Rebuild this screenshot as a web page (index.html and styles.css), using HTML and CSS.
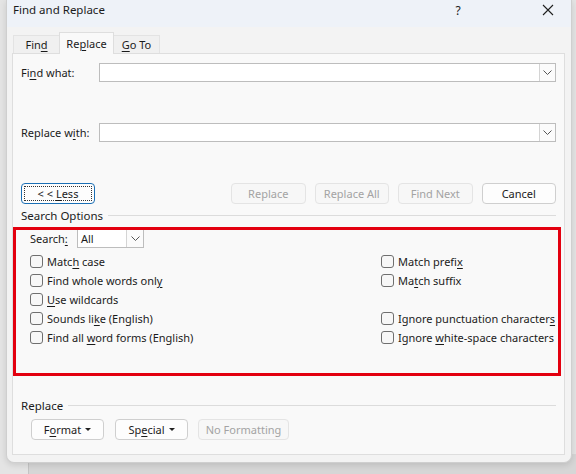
FILE: index.html
```html
<!DOCTYPE html>
<html>
<head>
<meta charset="utf-8">
<link rel="stylesheet" href="styles.css">
</head>
<body>
<div class="dialog">
  <div class="titlebar">
    <span class="title">Find and Replace</span>
    <span class="help">?</span>
    <span class="close"><svg width="12" height="12" viewBox="0 0 12 12"><path d="M1 1L11 11M11 1L1 11" stroke="#1f1f1f" stroke-width="1.1" fill="none"/></svg></span>
  </div>
  <div class="tabstrip">
    <div class="tab t-find"><span>Fin<u>d</u></span></div>
    <div class="tab active t-rep"><span>Re<u>p</u>lace</span></div>
    <div class="tab t-go"><span><u>G</u>o To</span></div>
  </div>
  <div class="panel">
    <div class="field first">
      <span class="flabel">Fi<u>n</u>d what:</span>
      <div class="combo"><div class="cbtn"><svg width="9" height="5" viewBox="0 0 9 5"><path d="M0.5 0.5L4.5 4.5L8.5 0.5" stroke="#555" fill="none"/></svg></div></div>
    </div>
    <div class="field second">
      <span class="flabel">Replace w<u>i</u>th:</span>
      <div class="combo"><div class="cbtn"><svg width="9" height="5" viewBox="0 0 9 5"><path d="M0.5 0.5L4.5 4.5L8.5 0.5" stroke="#555" fill="none"/></svg></div></div>
    </div>
    <div class="btnrow">
      <div class="btn less"><span class="focus"><span>&lt; &lt; <u>L</u>ess</span></span></div>
      <div class="spacer"></div>
      <div class="btn act dis">Replace</div>
      <div class="btn act dis">Replace All</div>
      <div class="btn act dis">Find Next</div>
      <div class="btn act">Cancel</div>
    </div>
    <div class="group g1"><span>Search Options</span><div class="rule"></div></div>
    <div class="options">
      <div class="searchrow">
        <span class="slabel">Search<u>:</u></span>
        <div class="sel"><span class="selv">All</span><div class="sbtn"><svg width="9" height="5" viewBox="0 0 9 5"><path d="M0.5 0.5L4.5 4.5L8.5 0.5" stroke="#555" fill="none"/></svg></div></div>
      </div>
      <div class="cols">
        <div class="col left">
          <div class="chk"><span class="box"></span><span>Matc<u>h</u> case</span></div>
          <div class="chk"><span class="box"></span><span>Find whole words onl<u>y</u></span></div>
          <div class="chk"><span class="box"></span><span><u>U</u>se wildcards</span></div>
          <div class="chk"><span class="box"></span><span>Sounds li<u>k</u>e (English)</span></div>
          <div class="chk"><span class="box"></span><span>Find all <u>w</u>ord forms (English)</span></div>
        </div>
        <div class="col right">
          <div class="chk"><span class="box"></span><span>Match prefi<u>x</u></span></div>
          <div class="chk"><span class="box"></span><span>Ma<u>t</u>ch suffix</span></div>
          <div class="chk blank"></div>
          <div class="chk"><span class="box"></span><span>Ignore punctuation character<u>s</u></span></div>
          <div class="chk"><span class="box"></span><span>Ignore <u>w</u>hite-space characters</span></div>
        </div>
      </div>
      <div class="highlight"></div>
    </div>
    <div class="group g2"><span>Replace</span><div class="rule"></div></div>
    <div class="btnrow2">
      <div class="btn drop"><span>F<u>o</u>rmat</span><span class="caret"></span></div>
      <div class="btn drop"><span>Sp<u>e</u>cial</span><span class="caret"></span></div>
      <div class="btn dis nf">No Formatting</div>
    </div>
  </div>
</div>
<div class="behind"></div>
</body>
</html>
```
FILE: styles.css
```css
html, body { margin: 0; padding: 0; }
body {
  width: 576px; height: 474px; overflow: hidden;
  background: #e4e4e4;
  font-family: "Noto Sans", "Open Sans", sans-serif;
  font-size: 11px;
  color: #1b1b1b;
}
u { text-decoration: underline; text-underline-offset: 2px; }
.dialog {
  position: relative; z-index: 1;
  margin-left: 6px;
  width: 566px; height: 463px;
  box-sizing: border-box;
  background: #f3f3f3;
  border: 1px solid #cfcfcf; border-top: none;
  border-radius: 0 0 8px 8px;
  display: flex; flex-direction: column;
  box-shadow: 0 2px 6px rgba(0,0,0,0.12);
}
.titlebar {
  height: 27px; flex: none; box-sizing: border-box;
  background: #eef2f8;
  display: flex; align-items: flex-start;
  padding-left: 6px; padding-top: 2px;
  font-size: 11.5px;
}
.title { flex: 1; }
.help { width: 20px; text-align: center; margin-right: 70px; font-size: 12px; }
.close { width: 20px; height: 16px; display: flex; align-items: center; justify-content: center; margin-right: 13px; }
.tabstrip {
  height: 26px; flex: none;
  display: flex; align-items: flex-end;
  padding-left: 6px;
}
.tab {
  height: 18px; box-sizing: border-box;
  display: flex; align-items: center; justify-content: center;
  border: 1px solid #e3e3e3; border-bottom: none;
  background: #f0f0f0;
}
.t-find { width: 46px; border-right: none; }
.t-rep { width: 55px; height: 22px; margin-bottom: -1px; background: #f9f9f9; position: relative; z-index: 2; border-color: #dedede; align-items: flex-start; padding-top: 3px; }
.t-go { width: 46px; border-left: none; }
.panel {
  flex: none;
  margin-left: 5px;
  width: 553px; height: 402px; box-sizing: border-box;
  background: #f9f9f9;
  border: 1px solid #dedede;
  display: flex; flex-direction: column;
  padding: 0 8px 0 8px;
}
.field { display: flex; align-items: center; height: 19px; }
.field.first { margin-top: 9px; }
.field.second { margin-top: 41px; }
.flabel { width: 78px; flex: none; }
.combo {
  flex: 1; height: 19px; box-sizing: border-box;
  background: #fff; border: 1px solid #bdbdbd;
  display: flex; justify-content: flex-end;
}
.cbtn {
  width: 16px; height: 17px; box-sizing: border-box;
  border-left: 1px solid #d4d4d4; background: #fbfbfb;
  display: flex; align-items: center; justify-content: center;
}
.btnrow { display: flex; margin-top: 41px; height: 21px; gap: 9px; }
.spacer { flex: 1; }
.btn {
  width: 74px; height: 21px; box-sizing: border-box;
  border: 1px solid #cfcfcf; border-radius: 4px;
  background: #fdfdfd;
  display: flex; align-items: center; justify-content: center;
}
.btn.act { width: 74.5px; }
.btn.less { border-color: #1a6fb5; border-width: 1px; padding: 2px; }
.focus { border: 1px dotted #333; width: 100%; height: 100%; box-sizing: border-box; display: flex; align-items: center; justify-content: center; }
.btn.dis { color: #a3a3a3; border-color: #e4e4e4; background: #f7f7f7; }
.group { display: flex; align-items: center; gap: 5px; height: 14px; }
.group span { font-size: 11.5px; }
.group .rule { flex: 1; height: 1px; background: #dcdcdc; }
.g1 { margin-top: 4px; }
.options { position: relative; height: 176px; }
.searchrow { display: flex; align-items: center; margin-top: 6px; height: 20px; padding-left: 9px; }
.slabel { width: 47px; }
.sel {
  width: 67px; height: 20px; box-sizing: border-box;
  border: 1px solid #bdbdbd; background: #fff;
  display: flex; align-items: center;
}
.selv { flex: 1; padding-left: 3px; }
.sbtn { width: 16px; height: 18px; border-left: 1px solid #d4d4d4; display: flex; align-items: center; justify-content: center; background: #fbfbfb; }
.cols { display: flex; margin-top: 4px; padding-left: 9px; }
.col.left { width: 351px; }
.chk { height: 19px; display: flex; align-items: center; }
.box {
  width: 13px; height: 13px; box-sizing: border-box;
  border: 1px solid #6f6f6f; border-radius: 3px; background: #f7f7f7;
  margin-right: 4px; flex: none;
}
.highlight {
  position: absolute; left: -8px; top: 5px;
  width: 548px; height: 149px; box-sizing: border-box;
  border: 3px solid #e3000f;
  pointer-events: none;
}
.btnrow2 { display: flex; gap: 11px; margin-top: 7px; padding-left: 10px; }
.btn.drop { width: 73px; gap: 4px; }
.caret { width: 0; height: 0; border-left: 3px solid transparent; border-right: 3px solid transparent; border-top: 3px solid #222; display: inline-block; }
.btn.nf { width: 91px; margin-left: -1px; }
.behind {
  margin-left: 28px; height: 20px; margin-top: -9px;
  background: #d6d6d6; border-left: 1px solid #c4c4c4;
}
```
